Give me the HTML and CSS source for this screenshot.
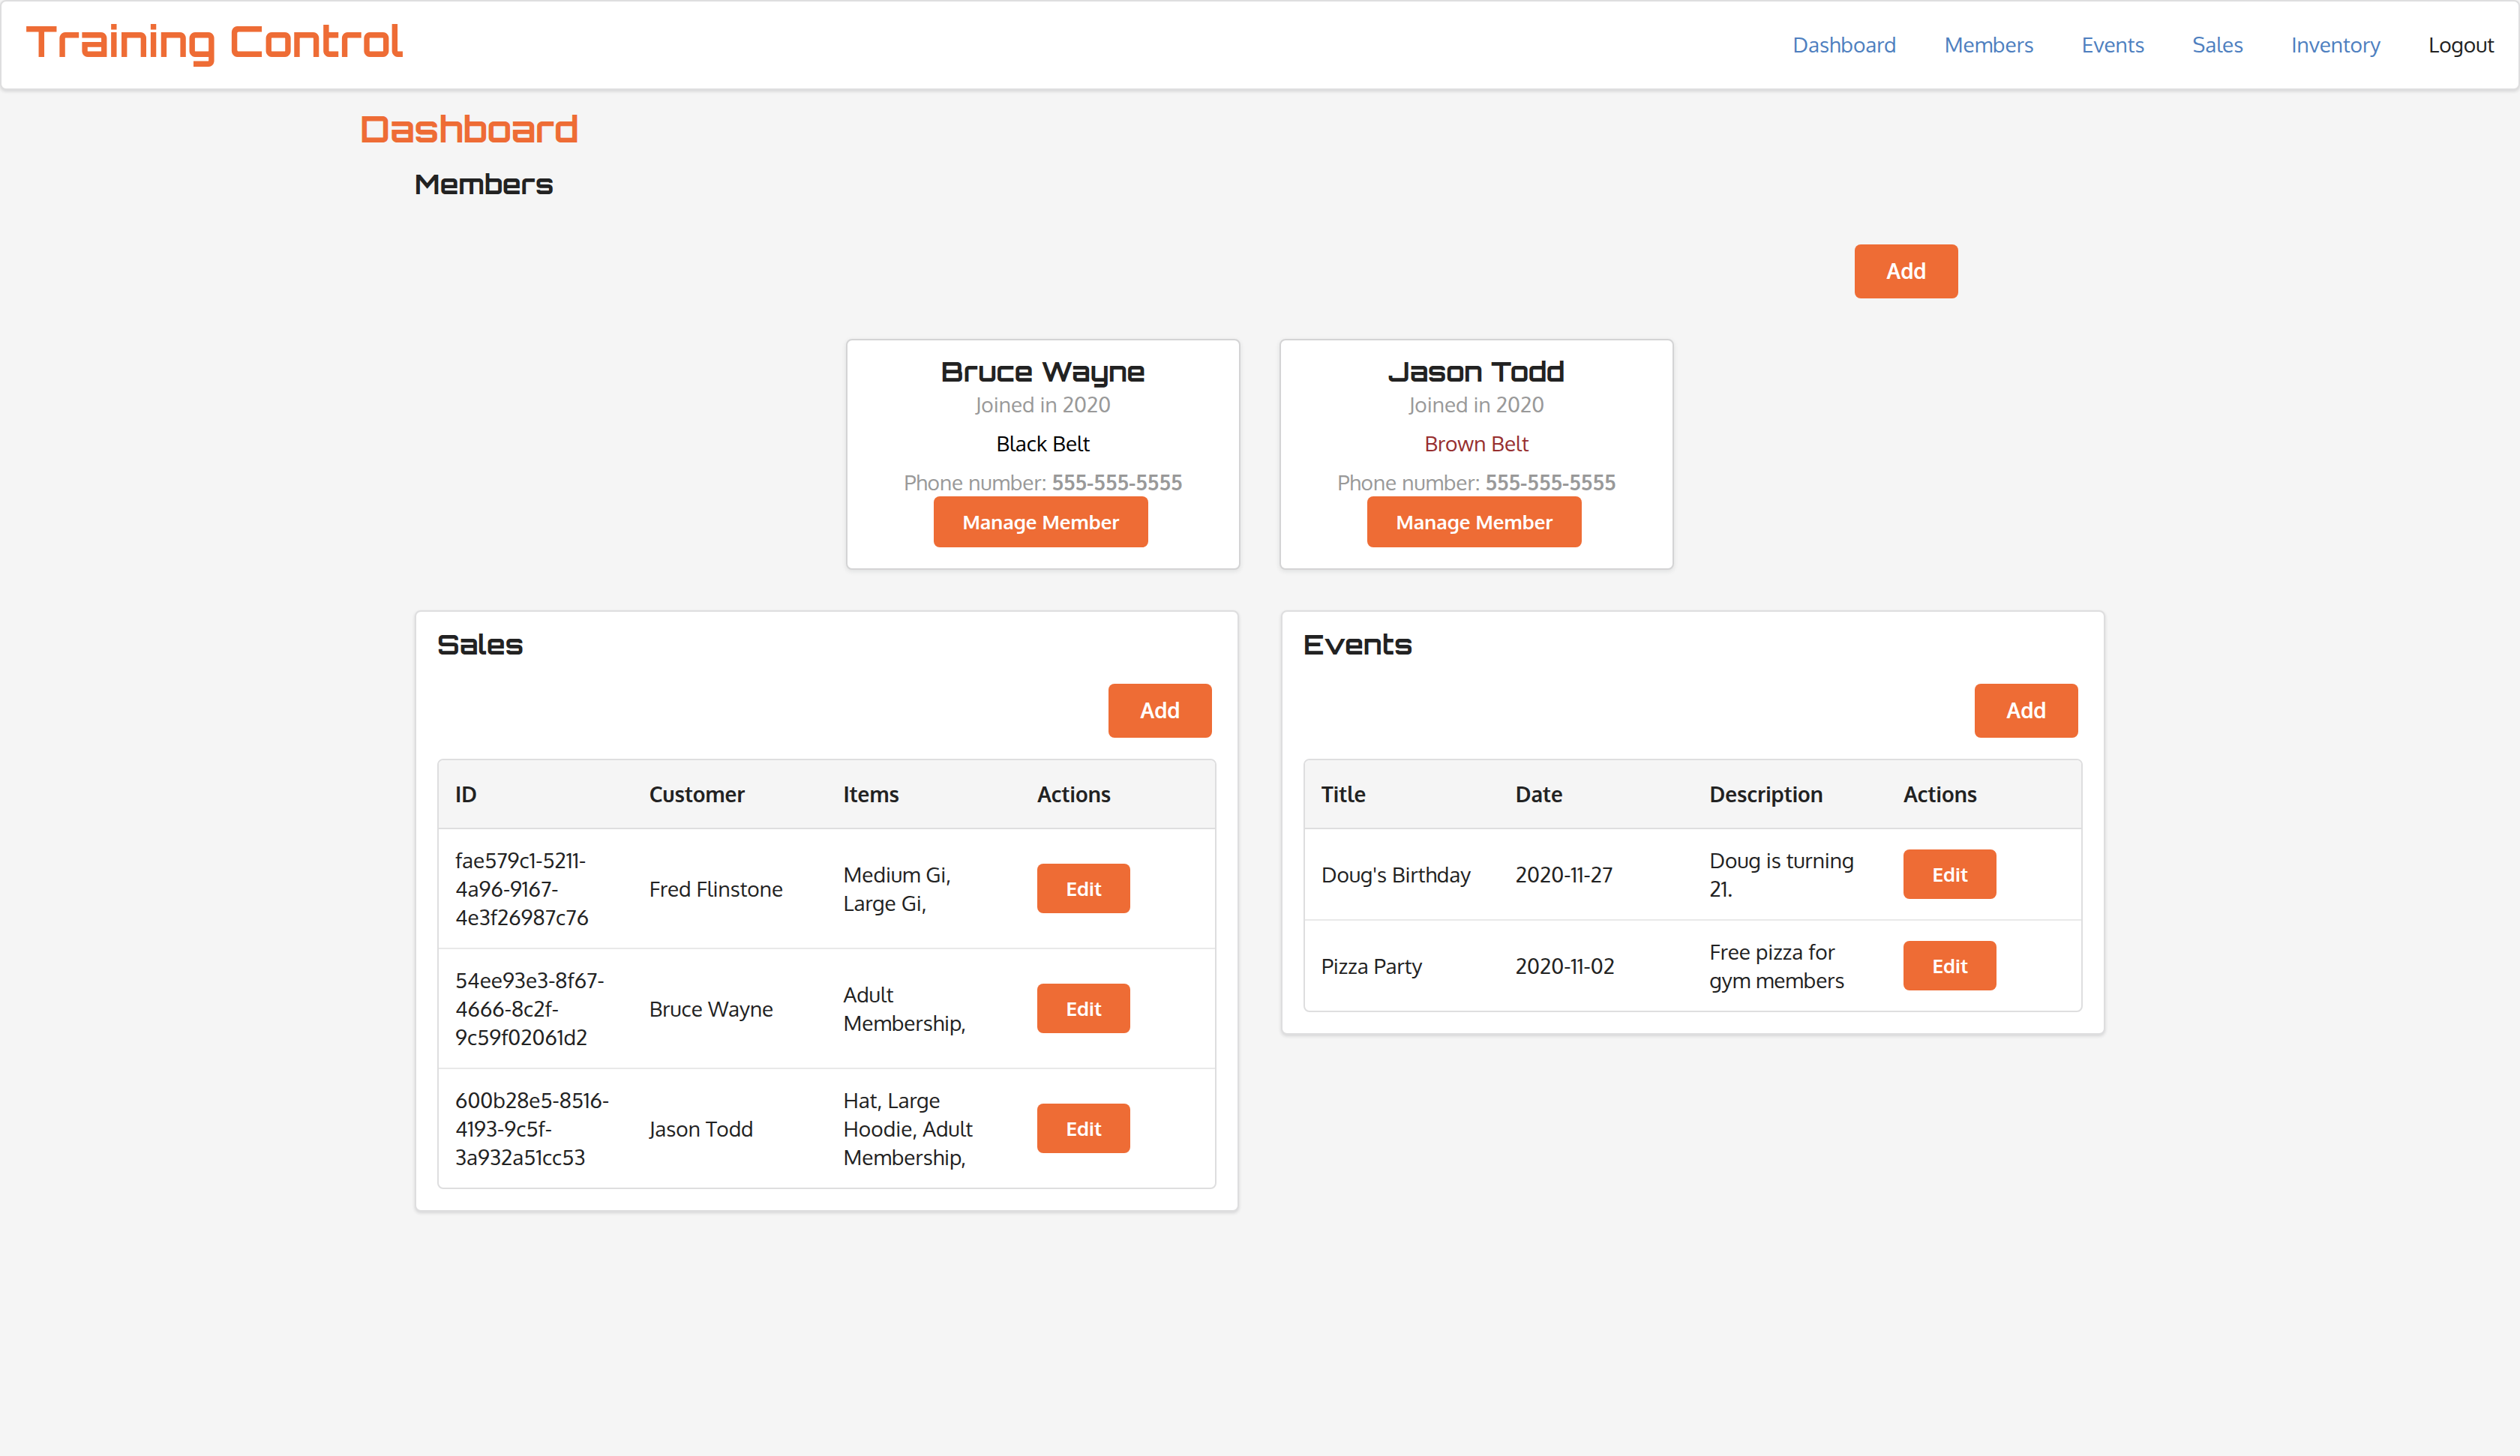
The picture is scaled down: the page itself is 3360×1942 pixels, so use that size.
FILE: index.html
```html
<!DOCTYPE html>
<html lang="en">
<head>
<meta charset="utf-8">
<title>Training Control</title>
<link rel="stylesheet" href="styles.css">
</head>
<body>
<header class="navbar">
  <h1 class="brand">Training Control</h1>
  <nav class="nav-links">
    <a href="#dashboard">Dashboard</a>
    <a href="#members">Members</a>
    <a href="#events">Events</a>
    <a href="#sales">Sales</a>
    <a href="#inventory">Inventory</a>
    <a class="logout" href="#logout">Logout</a>
  </nav>
</header>
<main class="page">
  <h2 class="page-title" id="dashboard">Dashboard</h2>
  <section class="members" id="members">
    <h3 class="heading">Members</h3>
    <div class="members-actions"><button class="button" type="button">Add</button></div>
    <div class="cards">
      <article class="card">
        <h4 class="heading">Bruce Wayne</h4>
        <p>Joined in 2020</p>
        <p class="black-belt">Black Belt</p>
        <p>Phone number: <b>555-555-5555</b></p>
        <button class="button small" type="button">Manage Member</button>
      </article>
      <article class="card">
        <h4 class="heading">Jason Todd</h4>
        <p>Joined in 2020</p>
        <p class="brown-belt">Brown Belt</p>
        <p>Phone number: <b>555-555-5555</b></p>
        <button class="button small" type="button">Manage Member</button>
      </article>
    </div>
  </section>
  <div class="panels">
    <section class="panel" id="sales">
      <h3 class="heading">Sales</h3>
      <div class="panel-actions"><button class="button" type="button">Add</button></div>
      <table class="table">
        <thead>
          <tr><th scope="col">ID</th><th scope="col">Customer</th><th scope="col">Items</th><th scope="col">Actions</th></tr>
        </thead>
        <tbody>
          <tr><td>fae579c1-5211-4a96-9167-4e3f26987c76</td><td>Fred Flinstone</td><td>Medium Gi, Large Gi,</td><td><button class="button small" type="button">Edit</button></td></tr>
          <tr><td>54ee93e3-8f67-4666-8c2f-9c59f02061d2</td><td>Bruce Wayne</td><td>Adult Membership,</td><td><button class="button small" type="button">Edit</button></td></tr>
          <tr><td>600b28e5-8516-4193-9c5f-3a932a51cc53</td><td>Jason Todd</td><td>Hat, Large Hoodie, Adult Membership,</td><td><button class="button small" type="button">Edit</button></td></tr>
        </tbody>
      </table>
    </section>
    <section class="panel" id="events">
      <h3 class="heading">Events</h3>
      <div class="panel-actions"><button class="button" type="button">Add</button></div>
      <table class="table">
        <thead>
          <tr><th scope="col">Title</th><th scope="col">Date</th><th scope="col">Description</th><th scope="col">Actions</th></tr>
        </thead>
        <tbody>
          <tr><td>Doug's Birthday</td><td>2020-11-27</td><td>Doug is turning 21.</td><td><button class="button small" type="button">Edit</button></td></tr>
          <tr><td>Pizza Party</td><td>2020-11-02</td><td>Free pizza for gym members</td><td><button class="button small" type="button">Edit</button></td></tr>
        </tbody>
      </table>
    </section>
  </div>
</main>
</body>
</html>
```
FILE: styles.css
```css
* {
  box-sizing: border-box;
}

body {
  margin: 0;
  background: #f5f5f5;
  color: #222;
  font-family: Oxygen, Roboto, "Noto Sans", sans-serif;
  font-size: 28px;
  line-height: 38px;
}

h1, h2, h3, h4, p {
  margin: 0;
}

.navbar {
  display: flex;
  justify-content: space-between;
  padding: 18px 32px 20px;
  background: #fff;
  border: 2px solid #dededf;
  border-radius: 8px;
  box-shadow: 0 2px 4px rgba(34, 36, 38, 0.15);
}

.brand, .page-title, .heading {
  font-family: Orbitron, "DejaVu Sans", sans-serif;
  font-weight: 700;
}

.brand {
  color: #ee6c35;
  font-size: 56px;
  line-height: 70px;
  padding-bottom: 8px;
}

.nav-links {
  display: flex;
  align-items: center;
  gap: 64px;
}

.nav-links a {
  color: #4e7fbf;
  text-decoration: none;
}

.nav-links .logout {
  color: #222;
}

.page {
  max-width: 2400px;
  margin: 0 auto;
  padding: 22px 0 56px;
}

.page-title {
  color: #ee6c35;
  font-size: 48px;
  line-height: 60px;
}

.heading {
  font-size: 36px;
  line-height: 36px;
}

.members, .panels {
  max-width: 2254px;
  margin: 0 auto;
}

.members {
  padding: 26px 0 54px;
}

.members-actions {
  display: flex;
  justify-content: flex-end;
  padding: 62px 196px 54px 0;
}

.button {
  min-width: 138px;
  height: 72px;
  padding: 0 38px 2px;
  border: 0;
  border-radius: 8px;
  background: #ee6c35;
  color: #fff;
  font-family: inherit;
  font-size: 28px;
  font-weight: 700;
  cursor: pointer;
}

.button.small {
  min-width: 124px;
  height: 66px;
  font-size: 26px;
}

.cards {
  display: flex;
  justify-content: center;
  gap: 52px;
}

.card {
  width: 526px;
  padding: 22px 28px 28px;
  background: #fff;
  border: 2px solid #d4d4d5;
  border-radius: 8px;
  box-shadow: 0 2px 6px rgba(34, 36, 38, 0.1);
  text-align: center;
  color: #999;
}

.card .heading {
  padding-bottom: 4px;
  color: #222;
  line-height: 40px;
}

.card p + p {
  margin-top: 14px;
}

.card .black-belt {
  color: #000;
}

.card .brown-belt {
  color: #972f2f;
}

.card .button {
  height: 68px;
  margin-right: 6px;
}

.panels {
  display: grid;
  grid-template-columns: 1fr 1fr;
  align-items: start;
  gap: 56px;
}

.panel {
  padding: 26px 28px 28px;
  background: #fff;
  border: 2px solid #dededf;
  border-radius: 8px;
  box-shadow: 0 2px 4px rgba(34, 36, 38, 0.15);
}

.panel-actions {
  display: flex;
  justify-content: flex-end;
  padding: 34px 6px 28px 0;
}

.table {
  width: 100%;
  table-layout: fixed;
  border: 2px solid #dededf;
  border-radius: 8px;
  border-collapse: separate;
  border-spacing: 0;
  overflow: hidden;
}

.table th, .table td {
  padding: 22px;
  text-align: left;
  vertical-align: middle;
}

.table th {
  padding: 26px 22px;
  background: #f5f5f5;
  border-bottom: 2px solid #dededf;
}

.table tr + tr td {
  border-top: 2px solid #e9e9e9;
}

.table .button {
  display: block;
}
```
